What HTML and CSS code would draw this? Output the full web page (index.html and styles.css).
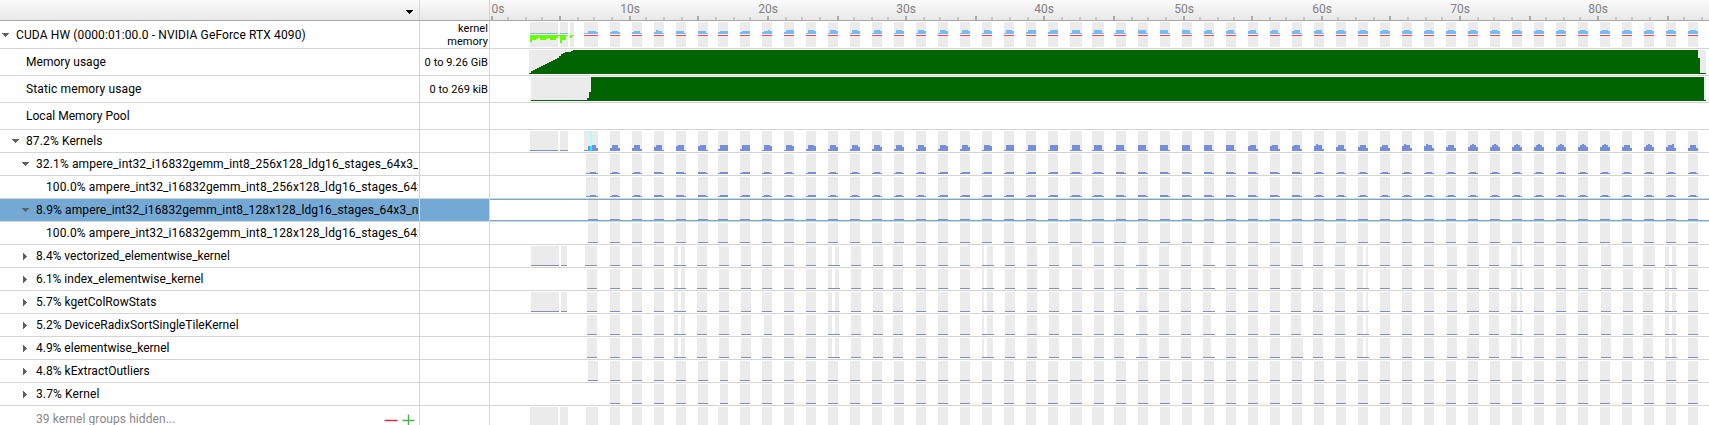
FILE: index.html
```html
<!DOCTYPE html>
<html lang="en">
<head>
<meta charset="utf-8">
<title>Timeline</title>
<link rel="stylesheet" href="styles.css">
</head>
<body>
<main class="timeline">
  <header class="row header">
    <div class="name"><svg class="sort" width="7" height="4" shape-rendering="crispEdges"><path d="M0 0h7v1h-1v1h-1v1h-1v1h-1v-1h-1v-1h-1v-1h-1z"/></svg></div>
    <div class="info"></div>
    <div class="track" id="ruler"></div>
  </header>
  <div id="rows"></div>
</main>
<script src="timeline.js"></script>
</body>
</html>
```

FILE: styles.css
```css
* { box-sizing: border-box; }
body {
  margin: 0;
  overflow: hidden;
  background: #fff;
  color: #000;
  font: 12px/14px Roboto, sans-serif;
}
.timeline { width: 1709px; height: 425px; overflow: hidden; }
.row {
  display: grid;
  grid-template-columns: 420px 70px 1219px;
  height: 23px;
  border-bottom: 1px solid #d4d4d4;
}
.header {
  height: 21px;
  background: linear-gradient(#fbfbfb, #e8e8e8);
  border-bottom-color: #a9a9a9;
}
.header .name { justify-content: flex-end; padding: 3px 6px 0 0; }
.tall { height: 27px; }
.first { height: 28px; }
.name, .info { display: flex; align-items: center; border-right: 1px solid #d4d4d4; overflow: hidden; }
.name { padding-right: 1px; }
.label { flex: 1; min-width: 0; overflow: hidden; white-space: nowrap; line-height: 20px; padding-bottom: 1px; letter-spacing: 0.03px; }
.tall .label, .first .label { padding-bottom: 0; }
.wide .label { letter-spacing: 0.12px; }
.tight .label { letter-spacing: -0.01px; }
.toggle { display: flex; width: 14px; flex: none; }
.toggle svg { fill: #606060; }
.toggle.right { padding-left: 1px; }
.level0 { padding-left: 2px; }
.level1 { padding-left: 12px; }
.level2 { padding-left: 22px; }
.level3 { padding-left: 32px; }
.info { justify-content: flex-end; text-align: right; font-size: 11px; line-height: 13px; letter-spacing: 0.06px; padding-right: 1px; white-space: pre; }
.track { overflow: hidden; }
.track svg { display: block; }
.tick-label { font: 12px Roboto, sans-serif; fill: #808080; text-anchor: middle; }
.selected .name, .selected .info { background: #75a9d5; }
.hidden { height: 26px; border-bottom: 0; }
.hidden .label { color: #888; padding-top: 3px; letter-spacing: 0.08px; }
.hidden .name { padding-right: 4px; align-items: flex-start; }
.controls { display: flex; gap: 4px; padding-top: 8px; }
.idle { fill: #ebebeb; }
.memory { fill: #006400; }
.kernel { fill: #73bcf5; }
.copy { fill: #f04848; }
.transfer { fill: #66ff00; }
.gap { fill: #fff; }
.load { fill: #7690da; }
.load-alt { fill: #7f8db8; }
.cursor-glow { fill: #b4fafa; }
.cursor-fade { fill: #d9f3f3; }
.cursor { fill: #00ffff; }
.select-line { fill: #75a9d5; }
.major { fill: #a9a9a9; }
.minor { fill: #c6c6c6; }
```

FILE: timeline.js
```js
const rect = (x, y, w, h, cls) => `<rect class="${cls}" x="${x}" y="${y}" width="${w}" height="${h}"/>`;
const svg = (h, body) => `<svg width="1219" height="${h}" viewBox="490 0 1219 ${h}" shape-rendering="crispEdges">${body}</svg>`;
const range = (from, to, step) => {
  const out = [];
  for (let v = from; v <= to; v += step) out.push(v);
  return out;
};

// Ruler: a tick every 1.25 s, a taller one every 5 s, a label every 10 s.
let ruler = '';
for (let k = 0; k < 71; k++) {
  const x = 491 + 2 * Math.floor(k * 17.3 / 2);
  const major = k % 4 === 0;
  ruler += rect(x, major ? 16 : 17, 2, major ? 4 : 3, major ? 'major' : 'minor');
  if (k % 8 === 0) ruler += `<text class="tick-label" x="${k ? x + 1 : 498}" y="13">${k / 8 * 10}s</text>`;
}
document.getElementById('ruler').innerHTML = svg(20, ruler);

const columns = (x, heights, base, cls) =>
  heights.map((h, i) => rect(x + 2 * i, base - h, 2, h, cls)).join('');
const striped = (x, heights, base) =>
  heights.map((h, i) => rect(x + 2 * i, base - h, 1, h, 'load') + rect(x + 2 * i + 1, base - h, 1, h, 'load-alt')).join('');
const stripedLine = (x, w, base) => striped(x, Array(Math.ceil(w / 2)).fill(1), base);

const starts = [...range(610, 698, 22), ...range(718, 1092, 22), 1116, ...range(1138, 1688, 22)];
const widthAt = x => x === 1070 || x === 1092 ? 12 : 10;

function cudaTrack() {
  let s = '';
  for (const [x, w] of [[530, 28], [560, 8], [570, 4], [584, 14], ...starts.map(x => [x, widthAt(x)])]) s += rect(x, 1, w, 25, 'idle');
  s += rect(530, 12, 28, 1, 'kernel') + rect(560, 12, 8, 1, 'kernel');
  s += rect(530, 13, 28, 1, 'gap') + rect(560, 13, 8, 1, 'gap');
  [7,5,5,4,3,5,5,5,4,3,5,5,5,3,1,8,5,5,1,0,3,1].forEach((h, i) => { s += rect(530 + 2 * i, 14, 2, h, 'transfer'); });
  const shape = x => {
    if (x === 610) return [2,3,3,3,2];
    if (x === 632) return [2,3,3,3,1];
    if (x === 654) return [2,4,3,3,1];
    if (x < 710) return [3,3,3,3,1];
    if (x === 718) return [2,3,3,3,3];
    if (x === 740) return [2,3,3,3,3];
    if (x === 762) return [2,3,3,4,3];
    if (x === 784) return [2,4,4,4,4];
    if (x < 1020) return [1,4,4,4,3];
    if (x < 1060) return [2,4,4,4,4];
    if (x < 1100) return [1,4,4,4,4,1];
    if (x < 1190) return [4,4,4,4,1];
    if (x < 1330) return [3,4,4,4,1];
    return [3,4,4,4,3];
  };
  const all = [[584, [1,1,3,3,3,3,2]], ...starts.map(x => [x, shape(x)])];
  for (const [x, h] of all) {
    s += columns(x, h, 13, 'kernel') + rect(x, 13, h.length * 2, 1, 'gap') + rect(x, 14, h.length * 2, 1, 'copy');
  }
  s += rect(1114, 12, 2, 1, 'kernel') + rect(1114, 14, 2, 1, 'copy');
  return s;
}

function memoryTrack() {
  let s = rect(529, 1, 1177, 24, 'idle');
  [1,3,4,5,6,7,8,9,10,11,12,13,14,15,16,18,20,21,22,22,22,23].forEach((h, i) => { s += rect(529 + 2 * i, 25 - h, 2, h, 'memory'); });
  return s + rect(573, 1, 1125, 24, 'memory') + rect(1698, 9, 2, 16, 'memory') + rect(1700, 24, 6, 1, 'memory');
}

function staticTrack() {
  return rect(531, 1, 1175, 24, 'idle') + rect(531, 24, 56, 1, 'memory') + rect(587, 22, 2, 3, 'memory')
    + rect(589, 16, 2, 9, 'memory') + rect(591, 1, 1113, 24, 'memory') + rect(1704, 24, 2, 1, 'memory');
}

function kernelsTrack() {
  let s = '';
  for (const [x, w] of [[530, 28], [560, 8], [584, 14], ...starts.map(x => [x, widthAt(x)])]) s += rect(x, 1, w, 20, 'idle');
  s += stripedLine(530, 28, 21) + stripedLine(560, 8, 21) + striped(584, [1,1,5,5,6,6,3], 21);
  s += rect(589, 1, 1, 15, 'cursor-fade') + rect(590, 1, 2, 15, 'cursor-glow') + rect(592, 1, 1, 14, 'cursor-fade') + rect(590, 16, 2, 5, 'cursor');
  const shape = x => {
    if (x === 610) return [3,6,6,6,3];
    if (x === 632) return [3,6,6,6,2];
    if (x === 654) return [4,6,6,6,1];
    if (x < 710) return [5,6,6,6,1];
    if (x < 750) return [2,6,6,6,6];
    if (x < 790) return [1,6,6,6,5];
    if (x === 806 || x === 938) return [2,6,6,6,5];
    if (x < 970) return [2,6,6,6,4];
    if (x < 1000) return [1,6,6,6,5];
    if (x < 1060) return [1,6,6,6,6];
    if (x < 1100) return [1,6,6,6,6,1];
    if (x < 1240) return [6,6,6,6,1];
    if (x === 1314) return [5,7,6,6,2];
    if (x < 1310) return [5,6,6,6,2];
    if (x === 1336) return [4,6,6,6,2];
    if (x === 1402 || x === 1424) return [5,7,6,6,3];
    if (x < 1460 || x === 1622) return [4,6,6,6,3];
    if (x === 1666) return [4,6,6,7,3];
    if (x === 1688) return [3,6,6,6,3];
    return [4,6,7,6,4];
  };
  for (const x of starts) s += x === 1116 ? striped(1114, [1,6,6,6,6,1], 21) : striped(x, shape(x), 21);
  return s;
}

function gemmTrack() {
  let s = rect(586, 1, 12, 20, 'idle') + striped(586, [1,1,2,2,2,1], 21);
  for (const x of starts) {
    const w = widthAt(x);
    const h = w === 12 ? [1,2,2,2,2,1]
      : x === 654 || x === 676 || x === 698 ? [2,2,2,2,1]
      : (x >= 718 && x <= 740) || x === 806 || (x >= 938 && x < 1060) ? [1,2,2,2,2]
      : x > 1110 && x < 1310 ? [2,2,2,2,1] : [1,2,2,2,1];
    s += rect(x, 1, w, 20, 'idle') + striped(x, h, 21);
  }
  return s;
}

// Spans are [x, width] or [x, width, lineX, lineWidth] when the line outruns the span.
const spanTrack = (spans, top = 1, line = true) => spans.map(([x, w, lx = x, lw = w]) =>
  rect(x, top, w, (line ? 21 : 25) - top, 'idle') + (line ? stripedLine(lx, lw, 21) : '')).join('');

const regular = (first, special = {}) => [...first, ...starts.map(x => special[x] || [x, widthAt(x)])];
const late = { 718: [720, 8], 1092: [1094, 10] };

function selectedTrack() {
  return spanTrack(regular([[588, 10]])) + rect(490, 0, 1219, 1, 'select-line') + rect(490, 21, 1219, 1, 'select-line');
}

function scattered({ head, w1291 = 10, s762 = [762, 10], s1467 = [1467, 12], w1643 = 10 }) {
  const ten = xs => xs.map(x => [x, 10]);
  return [...head, ...ten([610, 632, 654]), [674, 4, 674, 11], [681, 4, 681, 4], ...ten([697, 719, 741]), s762,
    ...ten([784, 806]), [828, 4, 828, 11], [835, 4], ...ten([851, 873, 893, 916, 938, 960]), [982, 2, 982, 11], [987, 6],
    ...ten([1005, 1027, 1049, 1072, 1094, 1114]), [1139, 8, 1136, 11], ...ten([1159, 1181]), [1203, 8, 1203, 11],
    ...ten([1226, 1248, 1270]), [1291, w1291], ...ten([1313, 1335]), [1357, 6, 1357, 11], [1366, 2],
    ...ten([1380, 1402, 1424, 1447]), s1467, ...ten([1489]), [1511, 6, 1511, 11], [1520, 2],
    ...ten([1534, 1556, 1578, 1601, 1623]), [1643, w1643], [1665, 4, 1665, 11], [1672, 4], [1688, 10]];
}

const early = [[531, 28], [561, 6]];
const rows = [
  { name: 'CUDA HW (0000:01:00.0 - NVIDIA GeForce RTX 4090)', level: 0, toggle: 'down', cls: 'first wide', info: 'kernel\nmemory', track: cudaTrack() },
  { name: 'Memory usage', level: 1, cls: 'tall', info: '0 to 9.26 GiB', track: memoryTrack() },
  { name: 'Static memory usage', level: 1, cls: 'tall wide', info: '0 to 269 kiB', track: staticTrack() },
  { name: 'Local Memory Pool', level: 1, cls: 'tall', track: '' },
  { name: '87.2% Kernels', level: 1, toggle: 'down', cls: 'wide', track: kernelsTrack() },
  { name: '32.1% ampere_int32_i16832gemm_int8_256x128_ldg16_stages_64x3_nt', level: 2, toggle: 'down', cls: 'wide', track: gemmTrack() },
  { name: '100.0% ampere_int32_i16832gemm_int8_256x128_ldg16_stages_64x3_nt', level: 3, cls: 'wide', track: gemmTrack() },
  { name: '8.9% ampere_int32_i16832gemm_int8_128x128_ldg16_stages_64x3_nt', level: 2, toggle: 'down', cls: 'selected wide', track: selectedTrack() },
  { name: '100.0% ampere_int32_i16832gemm_int8_128x128_ldg16_stages_64x3_nt', level: 3, cls: 'wide', track: spanTrack(regular([[588, 10]], { 1116: [1114, 12] })) },
  { name: '8.4% vectorized_elementwise_kernel', level: 2, toggle: 'right', cls: 'tight', track: spanTrack(scattered({ head: [...early, [585, 12]], w1291: 12, w1643: 12 })) },
  { name: '6.1% index_elementwise_kernel', level: 2, toggle: 'right', cls: 'tight', track: spanTrack(scattered({ head: [[587, 10]] })) },
  { name: '5.7% kgetColRowStats', level: 2, toggle: 'right', track: spanTrack(scattered({ head: [...early, [587, 10]] })) },
  { name: '5.2% DeviceRadixSortSingleTileKernel', level: 2, toggle: 'right', track: spanTrack(scattered({ head: [[587, 10]], s762: [764, 8], s1467: [1469, 10] })) },
  { name: '4.9% elementwise_kernel', level: 2, toggle: 'right', cls: 'tight', track: spanTrack(scattered({ head: [[587, 10]], w1291: 12 })) },
  { name: '4.8% kExtractOutliers', level: 2, toggle: 'right', track: spanTrack(regular([[588, 10]], late)) },
  { name: '3.7% Kernel', level: 2, toggle: 'right', cls: 'wide', track: spanTrack(regular([], late)) },
  { name: '39 kernel groups hidden...', level: 2, cls: 'hidden', track: spanTrack(regular([[530, 28], [560, 8], [586, 12]], { 1116: [1114, 12] }), 1, false) },
];

const arrows = {
  down: '<svg width="7" height="4" shape-rendering="crispEdges"><path d="M0 0h7v1h-1v1h-1v1h-1v1h-1v-1h-1v-1h-1v-1h-1z"/></svg>',
  right: '<svg width="4" height="7" shape-rendering="crispEdges"><path d="M0 0h1v1h1v1h1v1h1v1h-1v1h-1v1h-1v1h-1z"/></svg>',
};
const controls = `<div class="controls">
  <svg width="14" height="13"><path d="M0.5 6.5h13" stroke="#e8252c" stroke-width="1.4"/></svg>
  <svg width="13" height="13"><path d="M0.5 6.5h12M6.5 0.5v12" stroke="#4cae4c" stroke-width="1.4"/></svg></div>`;

const trackHeight = cls => cls.includes('first') ? 27 : cls.includes('tall') || cls === 'hidden' ? 26 : 22;

document.getElementById('rows').innerHTML = rows.map(({ name, level, toggle = '', cls = '', info = '', track }) =>
  `<div class="row ${cls}">
    <div class="name level${level}"><span class="toggle ${toggle}">${arrows[toggle] || ''}</span><span class="label">${name}</span>${cls === 'hidden' ? controls : ''}</div>
    <div class="info">${info}</div>
    <div class="track">${svg(trackHeight(cls), track)}</div>
  </div>`).join('');
```
